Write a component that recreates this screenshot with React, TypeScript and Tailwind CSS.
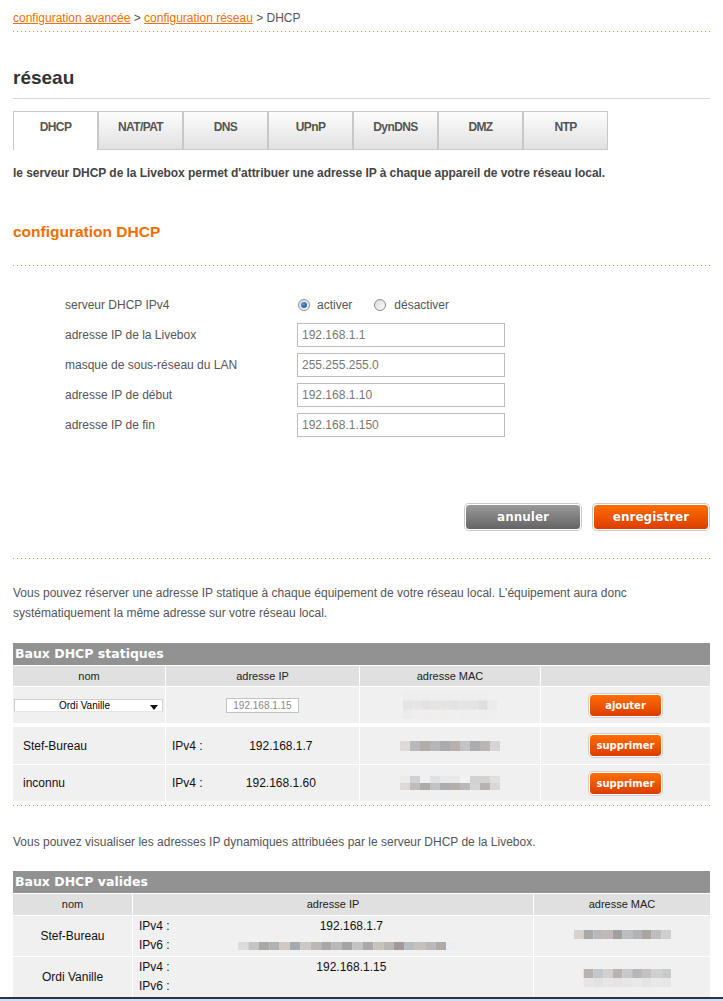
import React from "react";

const tabs = ["DHCP", "NAT/PAT", "DNS", "UPnP", "DynDNS", "DMZ", "NTP"];

const formRows = [
  { label: "adresse IP de la Livebox", value: "192.168.1.1" },
  { label: "masque de sous-réseau du LAN", value: "255.255.255.0" },
  { label: "adresse IP de début", value: "192.168.1.10" },
  { label: "adresse IP de fin", value: "192.168.1.150" },
];

// blurred bits of the screenshot (MAC / IPv6 addresses)
const macAdd = [
  ["#eeeeee", "#efefef", "#eeeeee", "#efefef", "#eeeeee", "#efefef", "#eeeeee", "#efefef", "#eeeeee", ""],
  ["#e6e4e3", "#e6e6e6", "#e4e2e1", "#e4e4e4", "#e6e4e3", "#e2e2e2", "#e6e4e3", "#e4e4e6", "#dedede", "#ebebeb"],
  ["#ebebeb", "#efefef", "#eeeeee", "#efefef", "#eeeeee", "#efefef", "#eeeeee", "#efefef", "#eeeeee", "#efefef"],
];
const macStef = [
  ["#dedad8", "#b9b9bb", "#b2adab", "#b6b6b6", "#abaaac", "#b6b0ae", "#c3c3c3", "#abacae", "#bab5b3", "#d5d5d7"],
];
const macInconnu = [
  ["#ebebeb", "#cfd2d4", "#f0f0f0", "#dfe2e4", "#e8e8e8", "#e8e8e8", "#f3f3f3", "#d2d2d2", "#d5d2cf", "#e0e0e0"],
  ["#dcd9d7", "#bdbdbd", "#aeacab", "#c3c3c3", "#acadaf", "#b4afad", "#b9b9b9", "#d4d4d4", "#b7b3b0", "#d7d7d7"],
];
const macStef2 = [
  ["#d6d2cf", "#a9a9ab", "#b9b9bb", "#c0b9b5", "#9fa0a2", "#bdbdbd", "#b2b3b5", "#aaa5a2", "#bdbdbd", "#cfcfcf"],
];
const macOrdi = [
  ["#f2efec", "#b7b2af", "#c3c7ca", "#d0d0d0", "#b9b4b1", "#c8c8c8", "#b6b6b8", "#c4c2c0", "#d0d0d0", "#c7c9cc"],
  ["#f0f0f0", "#e6e6e6", "#e2e2e2", "#e6e6e6", "#e4e4e4", "#e6e6e6", "#e9e9e9", "#e4e4e4", "#e8e8e8", "#e6e6e6"],
];
const ipv6Stef = [
  [
    "#dcdcdc", "#c5c5c5", "#aaa8a7", "#b0b3b6", "#cfcac5", "#a6a9ae", "#c8c8c8", "#bcb8b4", "#a8a6a6", "#b7b9bc", "#a7a3a2",
    "#c4c4c4", "#a9a8aa", "#c7c3bf", "#b9b7b6", "#a09a97", "#b7bcbf", "#c3c0bd", "#b9b9b9", "#aeaaa7", "#eceef2",
  ],
];

function Pix({ rows, w, h }: { rows: string[][]; w: number; h: number }) {
  const cols = Math.max(...rows.map((r) => r.length));
  return (
    <svg width={cols * w} height={rows.length * h} className="block">
      {rows.map((r, y) =>
        r.map((c, x) => (c ? <rect key={`${x}-${y}`} x={x * w} y={y * h} width={w} height={h} fill={c} /> : null))
      )}
    </svg>
  );
}

function Dotted({ className = "" }: { className?: string }) {
  return (
    <div
      className={
        "h-px bg-[linear-gradient(to_right,#f7883a_1px,transparent_1px)] bg-[length:4px_1px] bg-repeat-x " + className
      }
    />
  );
}

function Radio({ checked }: { checked?: boolean }) {
  return (
    <span className="flex h-[12px] w-[12px] items-center justify-center rounded-full border border-[#8d8d8d] bg-gradient-to-br from-[#dcdcdc] to-[#fafafa]">
      {checked && <span className="h-[6px] w-[6px] rounded-full bg-[radial-gradient(circle_at_35%_35%,#5aa0e6,#123f8a)]" />}
    </span>
  );
}

function BigButton({ label, orange }: { label: string; orange?: boolean }) {
  return (
    <button
      type="button"
      className={
        "h-[26px] w-[116px] rounded-[4px] border border-white font-['DejaVu_Sans',Verdana,sans-serif] text-[12px] font-bold text-white shadow-[0_0_0_1px_#c9c9c9] [text-shadow:0_0_1px_rgba(0,0,0,0.3)] " +
        (orange ? "bg-gradient-to-b from-[#ff6e00] to-[#dc3c00]" : "bg-gradient-to-b from-[#9b9b9b] to-[#646464]")
      }
    >
      {label}
    </button>
  );
}

function SmallButton({ label }: { label: string }) {
  return (
    <button
      type="button"
      className="h-[23px] w-[73px] rounded-[4px] border border-white bg-gradient-to-b from-[#ff6e00] to-[#dc3c00] font-['DejaVu_Sans',Verdana,sans-serif] text-[10px] font-bold text-white shadow-[0_0_0_1px_#cfcfcf]"
    >
      {label}
    </button>
  );
}

function TableTitle({ children }: { children: React.ReactNode }) {
  return (
    <div className="h-[22px] bg-[#929292] pl-[2px] font-['DejaVu_Sans',Verdana,sans-serif] text-[12.5px] font-bold leading-[22px] text-white">
      {children}
    </div>
  );
}

function IpCell({ value }: { value: string }) {
  return (
    <div className="flex items-center bg-[#f0f0f0] pl-[6px]">
      <span>IPv4 :</span>
      <span className="flex-1 text-center">{value}</span>
    </div>
  );
}

export default function App() {
  return (
    <div className="min-h-[1001px] bg-white font-['Liberation_Sans',Arial,sans-serif] text-[12px] text-[#555]">
      <div className="px-[13px]">
        {/* breadcrumb */}
        <div className="h-[31px] pt-[10px] leading-[16px]">
          <a className="text-[#f16e00] underline">configuration avancée</a>
          <span> &gt; </span>
          <a className="text-[#f16e00] underline">configuration réseau</a>
          <span> &gt; DHCP</span>
        </div>
        <Dotted />

        <h1 className="mt-[34px] text-[19px] font-bold leading-[24px] text-[#333]">réseau</h1>
        <div className="mt-[8px] h-px bg-[#d6d6d6]" />

        {/* tabs */}
        <div className="mt-[12px] flex h-[39px]">
          {tabs.map((t, i) =>
            i === 0 ? (
              <div
                key={t}
                className="w-[85px] border border-b-0 border-[#c8c8c8] bg-white pt-[8px] text-center text-[12px] font-bold leading-[14px] tracking-[-0.6px] text-[#555]"
              >
                {t}
              </div>
            ) : (
              <div
                key={t}
                className="w-[85px] border border-[#c8c8c8] bg-gradient-to-b from-[#fdfdfd] to-[#e1e1e1] pt-[8px] text-center text-[12px] font-bold leading-[14px] tracking-[-0.6px] text-[#555]"
              >
                {t}
              </div>
            )
          )}
        </div>

        <p className="mt-[15px] text-[12px] font-bold leading-[16px] tracking-[-0.05px] text-[#444]">
          le serveur DHCP de la Livebox permet d'attribuer une adresse IP à chaque appareil de votre réseau local.
        </p>

        <h2 className="mt-[41px] text-[15.5px] font-bold leading-[20px] text-[#f16e00]">configuration DHCP</h2>
        <Dotted className="mt-[23px]" />

        {/* form */}
        <div className="mt-[24px] pl-[52px]">
          <div className="flex h-[30px] items-center">
            <span className="w-[232px]">serveur DHCP IPv4</span>
            <span className="ml-[1px] flex items-center gap-[7px]">
              <Radio checked />
              <span>activer</span>
            </span>
            <span className="ml-[22px] flex items-center gap-[8px]">
              <Radio />
              <span>désactiver</span>
            </span>
          </div>
          {formRows.map((r) => (
            <div key={r.label} className="flex h-[30px] items-center">
              <span className="w-[232px]">{r.label}</span>
              <div className="h-[24px] w-[208px] border border-[#bdbdbd] bg-white pl-[4px] leading-[22px] text-[#777]">
                {r.value}
              </div>
            </div>
          ))}
        </div>

        <div className="mt-[64px] flex justify-end gap-[12px] pr-px">
          <BigButton label="annuler" />
          <BigButton label="enregistrer" orange />
        </div>

        <Dotted className="mt-[28px]" />

        <p className="mt-[24px] leading-[20px]">
          Vous pouvez réserver une adresse IP statique à chaque équipement de votre réseau local. L'équipement aura donc
          systématiquement la même adresse sur votre réseau local.
        </p>

        {/* static leases */}
        <div className="mt-[20px] text-[#111]">
          <TableTitle>Baux DHCP statiques</TableTitle>
          <div className="mt-px grid h-[20px] grid-cols-[152px_193px_180px_1fr] gap-x-px text-[11px] leading-[20px] text-[#222]">
            <div className="bg-[#e0e0e0] text-center">nom</div>
            <div className="bg-[#e0e0e0] text-center">adresse IP</div>
            <div className="bg-[#e0e0e0] text-center">adresse MAC</div>
            <div className="bg-[#e0e0e0]" />
          </div>
          <div className="mt-px grid h-[36px] grid-cols-[152px_193px_180px_1fr] gap-x-px">
            <div className="flex items-center bg-[#f0f0f0] pl-px">
              <div className="flex h-[13px] w-[149px] items-center border border-[#cfcfcf] border-b-[#e6e6e6] bg-white">
                <span className="flex-1 pl-[4px] text-center text-[10px] leading-[11px] text-black">Ordi Vanille</span>
                <svg width="8" height="5" className="mr-[4px] mt-[4px]">
                  <path d="M0 0h8L4 5z" fill="#111" />
                </svg>
              </div>
            </div>
            <div className="flex items-center justify-center bg-[#f0f0f0]">
              <div className="h-[15px] w-[73px] border border-[#c2c2c2] bg-white text-center text-[10px] leading-[13px] text-[#888]">
                192.168.1.15
              </div>
            </div>
            <div className="flex items-center justify-center bg-[#f0f0f0]">
              <Pix rows={macAdd} w={9.4} h={9.4} />
            </div>
            <div className="flex items-center justify-center bg-[#f0f0f0]">
              <SmallButton label="ajouter" />
            </div>
          </div>
          <div className="mt-[4px] grid h-[37px] grid-cols-[152px_193px_180px_1fr] gap-x-px">
            <div className="flex items-center bg-[#f0f0f0] pl-[10px]">Stef-Bureau</div>
            <IpCell value="192.168.1.7" />
            <div className="flex items-center justify-center bg-[#f0f0f0]">
              <Pix rows={macStef} w={10} h={10} />
            </div>
            <div className="flex items-center justify-center bg-[#f0f0f0]">
              <SmallButton label="supprimer" />
            </div>
          </div>
          <div className="mt-px grid h-[36px] grid-cols-[152px_193px_180px_1fr] gap-x-px">
            <div className="flex items-center bg-[#f0f0f0] pl-[10px]">inconnu</div>
            <IpCell value="192.168.1.60" />
            <div className="flex items-center justify-center bg-[#f0f0f0]">
              <Pix rows={macInconnu} w={10} h={7} />
            </div>
            <div className="flex items-center justify-center bg-[#f0f0f0]">
              <SmallButton label="supprimer" />
            </div>
          </div>
        </div>

        <Dotted className="mt-[4px]" />

        <p className="mt-[26px] leading-[20px]">
          Vous pouvez visualiser les adresses IP dynamiques attribuées par le serveur DHCP de la Livebox.
        </p>

        {/* valid leases */}
        <div className="mt-[19px] text-[#111]">
          <TableTitle>Baux DHCP valides</TableTitle>
          <div className="mt-px grid h-[21px] grid-cols-[119px_400px_1fr] gap-x-px text-[11px] leading-[21px] text-[#222]">
            <div className="bg-[#e0e0e0] text-center">nom</div>
            <div className="bg-[#e0e0e0] text-center">adresse IP</div>
            <div className="bg-[#e0e0e0] text-center">adresse MAC</div>
          </div>
          <div className="mt-px grid h-[40px] grid-cols-[119px_400px_1fr] gap-x-px">
            <div className="flex items-center justify-center bg-[#f0f0f0]">Stef-Bureau</div>
            <div className="flex bg-[#f0f0f0] pl-[6px] pt-px leading-[19px]">
              <div>
                <div>IPv4 :</div>
                <div>IPv6 :</div>
              </div>
              <div className="flex flex-1 flex-col items-center">
                <div>192.168.1.7</div>
                <div className="flex h-[19px] items-center pr-[8px]">
                  <Pix rows={ipv6Stef} w={10.4} h={8} />
                </div>
              </div>
            </div>
            <div className="flex items-center justify-center bg-[#f0f0f0] pb-[4px]">
              <Pix rows={macStef2} w={9.7} h={9} />
            </div>
          </div>
          <div className="mt-px grid h-[40px] grid-cols-[119px_400px_1fr] gap-x-px">
            <div className="flex items-center justify-center bg-[#f0f0f0]">Ordi Vanille</div>
            <div className="flex bg-[#f0f0f0] pl-[6px] pt-px leading-[19px]">
              <div>
                <div>IPv4 :</div>
                <div>IPv6 :</div>
              </div>
              <div className="flex flex-1 flex-col items-center">
                <div>192.168.1.15</div>
              </div>
            </div>
            <div className="flex items-center justify-center bg-[#f0f0f0] pt-[2px]">
              <Pix rows={macOrdi} w={9.7} h={9} />
            </div>
          </div>
        </div>
      </div>

      {/* bottom window edge */}
      <div className="h-[2px] bg-[#2b3440]" />
      <div className="h-[2px] bg-[#cddff4]" />
    </div>
  );
}
